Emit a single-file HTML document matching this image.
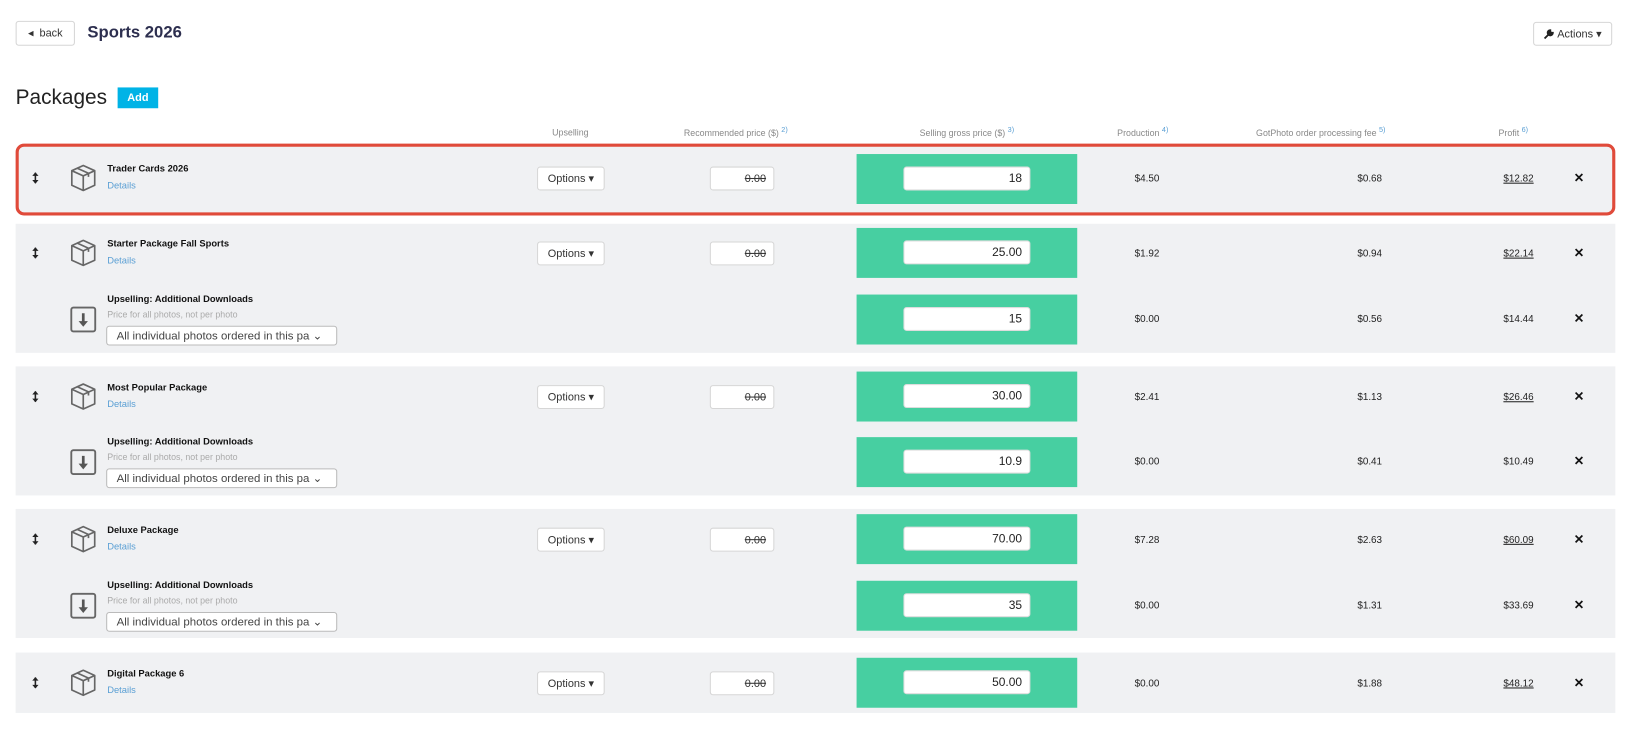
<!DOCTYPE html>
<html><head><meta charset="utf-8"><style>
*{box-sizing:border-box;margin:0;padding:0}
html,body{width:1632px;height:736px;overflow:hidden;background:#fff}
body{font-family:"Liberation Sans",sans-serif;color:#222}
#s{position:absolute;left:0;top:0;width:1568px;height:707px;transform:scale(1.0408);transform-origin:0 0}
.a{position:absolute}
.btn{position:absolute;background:#fff;border:1px solid #d6d6d6;border-radius:3px;font-size:10.5px;display:flex;align-items:center;justify-content:center;color:#333}
.hd{position:absolute;top:122px;font-size:8.5px;color:#888;transform:translateX(-50%);white-space:nowrap}
.hd sup{color:#5a9fd4;font-size:7px}
.grp{position:absolute;left:15px;width:1537px;background:#f0f1f3}
.sel{border:3px solid #e04a3a;border-radius:8px}
.c{position:absolute;transform:translate(-50%,-50%);font-size:9.5px;white-space:nowrap;color:#222}
.green{position:absolute;left:823px;width:212px;height:48px;background:#47cfa1}
.inp{position:absolute;left:45px;top:12px;width:122px;height:23px;background:#fff;border:1px solid #ddd;border-radius:3px;font-size:11.5px;text-align:right;padding:5px 7px 0 0;color:#222}
.rec{position:absolute;left:682px;width:62px;height:23px;background:#fff;border:1px solid #d6d6d6;border-radius:3px;font-size:10.5px;text-align:right;padding:5px 7px 0 0;text-decoration:line-through;color:#333}
.nm{position:absolute;left:103px;font-size:9px;font-weight:bold;color:#111}
.dt{position:absolute;left:103px;font-size:9px;color:#5a9fd4}
.sub{position:absolute;left:103px;font-size:8.5px;color:#aaa}
.dd{position:absolute;left:102px;width:222px;height:19px;background:#fff;border:1px solid #bbb;border-radius:3px;font-size:11px;color:#444;padding:2px 0 0 9px}
.x{position:absolute;left:1512px;font-size:12px;font-weight:bold;color:#111}
.u{text-decoration:underline}
</style></head><body><div id="s">
<div class="btn" style="left:15px;top:20px;width:57px;height:24px">&#9666;&nbsp; back</div>
<div class="a" style="left:84px;top:23px;font-size:16px;font-weight:bold;color:#2d2f4f">Sports 2026</div>
<div class="btn" style="left:1473px;top:21px;width:76px;height:23px"><svg width="10" height="10" viewBox="0 0 10 10" style="margin-right:3px"><path d="M1 9 L5.2 4.8 M6.5 1 a2.5 2.5 0 1 0 2.5 2.5 L7.5 3.5 L6.5 2.5 Z" stroke="#222" stroke-width="1.8" fill="#222"/></svg>Actions &#9662;</div>
<div class="a" style="left:15px;top:83px;font-size:20px;color:#222">Packages</div>
<div class="a" style="left:113px;top:84px;width:39px;height:20px;background:#00b3e6;color:#fff;font-size:10.5px;font-weight:bold;text-align:center;line-height:20px">Add</div>
<div class="hd" style="left:548px">Upselling</div>
<div class="hd" style="left:707px">Recommended price ($) <sup>2)</sup></div>
<div class="hd" style="left:929px">Selling gross price ($) <sup>3)</sup></div>
<div class="hd" style="left:1098px">Production <sup>4)</sup></div>
<div class="hd" style="left:1269px">GotPhoto order processing fee <sup>5)</sup></div>
<div class="hd" style="left:1454px">Profit <sup>6)</sup></div>

<div class="grp sel" style="top:138px;height:69px"></div>
<div class="grp" style="top:215px;height:124px"></div>
<div class="grp" style="top:352px;height:124px"></div>
<div class="grp" style="top:489px;height:124px"></div>
<div class="grp" style="top:627px;height:58px"></div>

<svg width="0" height="0" style="position:absolute"><defs>
<symbol id="box" viewBox="0 0 26 28"><g fill="none" stroke="#666" stroke-width="1.6" stroke-linejoin="round"><path d="M13 2 L24 7 L24 21 L13 26 L2 21 L2 7 Z"/><path d="M2 7 L13 12 L24 7 M13 12 L13 26"/><path d="M7 4.5 L18 9.5 L18 13"/></g></symbol>
<symbol id="dl" viewBox="0 0 26 26"><rect x="1.5" y="1.5" width="23" height="23" rx="2" fill="none" stroke="#666" stroke-width="1.8"/><path d="M13 7 V17" stroke="#555" stroke-width="2.6"/><path d="M8.5 14.5 L13 20 L17.5 14.5 Z" fill="#555"/></symbol>
<symbol id="drag" viewBox="0 0 8 12"><path d="M4 1 V11" stroke="#222" stroke-width="1.5"/><path d="M1 4 L4 0.5 L7 4Z M1 8 L4 11.5 L7 8Z" fill="#222"/></symbol>
</defs></svg>

<!-- group 1 -->
<svg class="a" style="left:30px;top:165px" width="8" height="12"><use href="#drag"/></svg>
<svg class="a" style="left:67px;top:157px" width="26" height="28"><use href="#box"/></svg>
<div class="nm" style="top:157px">Trader Cards 2026</div><div class="dt" style="top:173px">Details</div>
<div class="btn" style="left:516px;top:160px;width:65px;height:23px">Options &#9662;</div>
<div class="rec" style="top:160px">0.00</div>
<div class="green" style="top:148px"><div class="inp">18</div></div>
<div class="c" style="left:1102px;top:172px">$4.50</div><div class="c" style="left:1316px;top:172px">$0.68</div><div class="c u" style="left:1459px;top:172px">$12.82</div>
<div class="x" style="top:164px">&#x2715;</div>

<!-- group 2 -->
<svg class="a" style="left:30px;top:237px" width="8" height="12"><use href="#drag"/></svg>
<svg class="a" style="left:67px;top:229px" width="26" height="28"><use href="#box"/></svg>
<div class="nm" style="top:229px">Starter Package Fall Sports</div><div class="dt" style="top:245px">Details</div>
<div class="btn" style="left:516px;top:232px;width:65px;height:23px">Options &#9662;</div>
<div class="rec" style="top:232px">0.00</div>
<div class="green" style="top:219px"><div class="inp">25.00</div></div>
<div class="c" style="left:1102px;top:244px">$1.92</div><div class="c" style="left:1316px;top:244px">$0.94</div><div class="c u" style="left:1459px;top:244px">$22.14</div>
<div class="x" style="top:236px">&#x2715;</div>
<svg class="a" style="left:67px;top:294px" width="26" height="26"><use href="#dl"/></svg>
<div class="nm" style="top:282px">Upselling: Additional Downloads</div><div class="sub" style="top:297px">Price for all photos, not per photo</div>
<div class="dd" style="top:313px">All individual photos ordered in this pa &#8964;</div>
<div class="green" style="top:283px"><div class="inp">15</div></div>
<div class="c" style="left:1102px;top:307px">$0.00</div><div class="c" style="left:1316px;top:307px">$0.56</div><div class="c" style="left:1459px;top:307px">$14.44</div>
<div class="x" style="top:299px">&#x2715;</div>

<!-- group 3 -->
<svg class="a" style="left:30px;top:375px" width="8" height="12"><use href="#drag"/></svg>
<svg class="a" style="left:67px;top:367px" width="26" height="28"><use href="#box"/></svg>
<div class="nm" style="top:367px">Most Popular Package</div><div class="dt" style="top:383px">Details</div>
<div class="btn" style="left:516px;top:370px;width:65px;height:23px">Options &#9662;</div>
<div class="rec" style="top:370px">0.00</div>
<div class="green" style="top:357px"><div class="inp">30.00</div></div>
<div class="c" style="left:1102px;top:382px">$2.41</div><div class="c" style="left:1316px;top:382px">$1.13</div><div class="c u" style="left:1459px;top:382px">$26.46</div>
<div class="x" style="top:374px">&#x2715;</div>
<svg class="a" style="left:67px;top:431px" width="26" height="26"><use href="#dl"/></svg>
<div class="nm" style="top:419px">Upselling: Additional Downloads</div><div class="sub" style="top:434px">Price for all photos, not per photo</div>
<div class="dd" style="top:450px">All individual photos ordered in this pa &#8964;</div>
<div class="green" style="top:420px"><div class="inp">10.9</div></div>
<div class="c" style="left:1102px;top:444px">$0.00</div><div class="c" style="left:1316px;top:444px">$0.41</div><div class="c" style="left:1459px;top:444px">$10.49</div>
<div class="x" style="top:436px">&#x2715;</div>

<!-- group 4 -->
<svg class="a" style="left:30px;top:512px" width="8" height="12"><use href="#drag"/></svg>
<svg class="a" style="left:67px;top:504px" width="26" height="28"><use href="#box"/></svg>
<div class="nm" style="top:504px">Deluxe Package</div><div class="dt" style="top:520px">Details</div>
<div class="btn" style="left:516px;top:507px;width:65px;height:23px">Options &#9662;</div>
<div class="rec" style="top:507px">0.00</div>
<div class="green" style="top:494px"><div class="inp">70.00</div></div>
<div class="c" style="left:1102px;top:519px">$7.28</div><div class="c" style="left:1316px;top:519px">$2.63</div><div class="c u" style="left:1459px;top:519px">$60.09</div>
<div class="x" style="top:511px">&#x2715;</div>
<svg class="a" style="left:67px;top:569px" width="26" height="26"><use href="#dl"/></svg>
<div class="nm" style="top:557px">Upselling: Additional Downloads</div><div class="sub" style="top:572px">Price for all photos, not per photo</div>
<div class="dd" style="top:588px">All individual photos ordered in this pa &#8964;</div>
<div class="green" style="top:558px"><div class="inp">35</div></div>
<div class="c" style="left:1102px;top:582px">$0.00</div><div class="c" style="left:1316px;top:582px">$1.31</div><div class="c" style="left:1459px;top:582px">$33.69</div>
<div class="x" style="top:574px">&#x2715;</div>

<!-- group 5 -->
<svg class="a" style="left:30px;top:650px" width="8" height="12"><use href="#drag"/></svg>
<svg class="a" style="left:67px;top:642px" width="26" height="28"><use href="#box"/></svg>
<div class="nm" style="top:642px">Digital Package 6</div><div class="dt" style="top:658px">Details</div>
<div class="btn" style="left:516px;top:645px;width:65px;height:23px">Options &#9662;</div>
<div class="rec" style="top:645px">0.00</div>
<div class="green" style="top:632px"><div class="inp">50.00</div></div>
<div class="c" style="left:1102px;top:657px">$0.00</div><div class="c" style="left:1316px;top:657px">$1.88</div><div class="c u" style="left:1459px;top:657px">$48.12</div>
<div class="x" style="top:649px">&#x2715;</div>
</div></body></html>
